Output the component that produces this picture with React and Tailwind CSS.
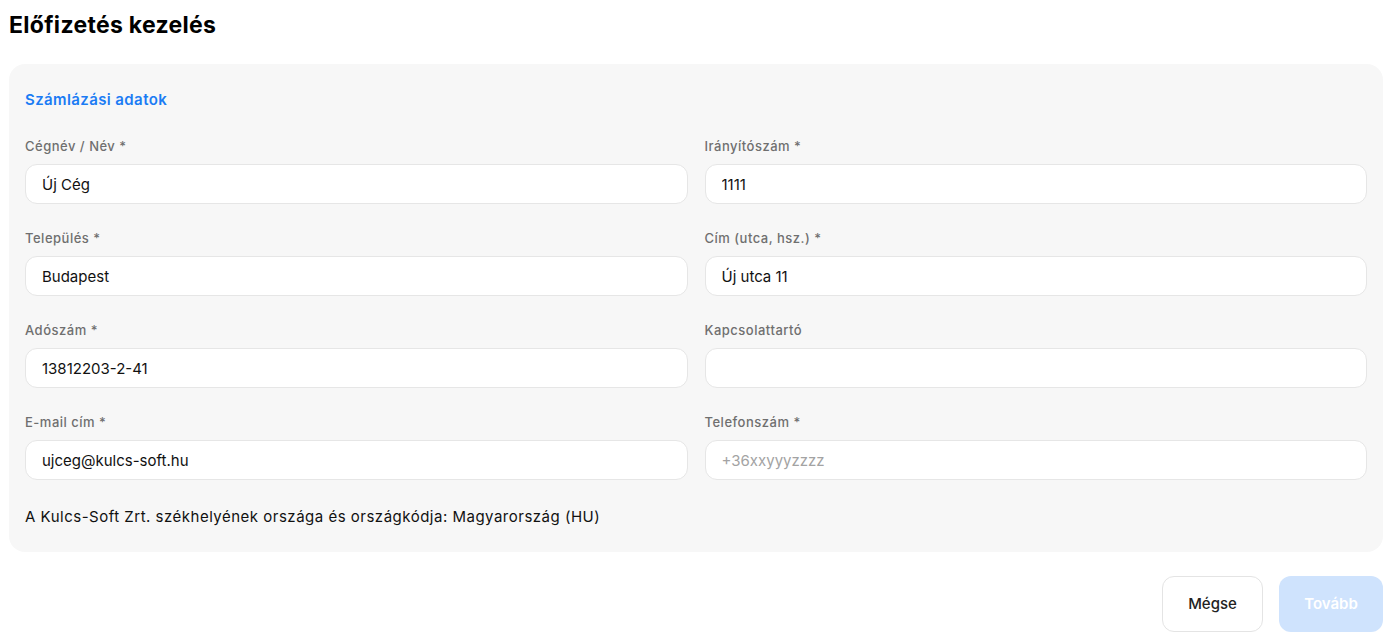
import { useState } from "react";

const FONT = "font-['Inter','Liberation_Sans',sans-serif]";

function Field({ label, value, placeholder, onChange }) {
  return (
    <div className="flex flex-col">
      <label className="text-[13px] font-medium text-[#6f6f6f] leading-4 tracking-[0.5px] mb-[10px]">
        {label}
      </label>
      <input
        className="h-10 w-full rounded-xl border border-[#e6e6e6] bg-white px-4 text-[15px] text-[#111] placeholder:text-[#a3a3a3] outline-none"
        value={value}
        placeholder={placeholder}
        onChange={(e) => onChange(e.target.value)}
      />
    </div>
  );
}

export default function App() {
  const [form, setForm] = useState({
    nev: "Új Cég",
    irsz: "1111",
    telepules: "Budapest",
    cim: "Új utca 11",
    adoszam: "13812203-2-41",
    kapcsolat: "",
    email: "ujceg@kulcs-soft.hu",
    telefon: "",
  });

  const set = (key) => (v) => setForm({ ...form, [key]: v });

  return (
    <div className={`min-h-screen bg-white px-[9px] pt-[11px] ${FONT}`}>
      <h1 className="text-[23px] font-bold text-black leading-7 tracking-[0.3px]">
        Előfizetés kezelés
      </h1>

      {/* Számlázási adatok */}
      <div className="mt-[25px] rounded-2xl bg-[#f7f7f7] px-4 pt-[26px] pb-[25px]">
        <h2 className="text-[15px] font-semibold text-[#1b7cf4] leading-5 tracking-[0.4px]">
          Számlázási adatok
        </h2>

        <div className="mt-[28px] grid grid-cols-2 gap-x-[17px] gap-y-[26px]">
          <Field label="Cégnév / Név *" value={form.nev} onChange={set("nev")} />
          <Field label="Irányítószám *" value={form.irsz} onChange={set("irsz")} />
          <Field label="Település *" value={form.telepules} onChange={set("telepules")} />
          <Field label="Cím (utca, hsz.) *" value={form.cim} onChange={set("cim")} />
          <Field label="Adószám *" value={form.adoszam} onChange={set("adoszam")} />
          <Field label="Kapcsolattartó" value={form.kapcsolat} onChange={set("kapcsolat")} />
          <Field label="E-mail cím *" value={form.email} onChange={set("email")} />
          <Field
            label="Telefonszám *"
            value={form.telefon}
            placeholder="+36xxyyyzzzz"
            onChange={set("telefon")}
          />
        </div>

        <p className="mt-[27px] text-[15px] text-[#111] leading-5 tracking-[0.5px]">
          A Kulcs-Soft Zrt. székhelyének országa és országkódja: Magyarország (HU)
        </p>
      </div>

      <div className="mt-[24px] flex justify-end gap-4">
        <button className="h-14 w-[101px] rounded-xl border border-[#e4e4e4] bg-white text-[15px] font-medium text-[#222]">
          Mégse
        </button>
        <button
          disabled
          className="h-14 w-[104px] rounded-xl bg-[#cfe3fd] text-[15px] font-semibold text-white"
        >
          Tovább
        </button>
      </div>
    </div>
  );
}
